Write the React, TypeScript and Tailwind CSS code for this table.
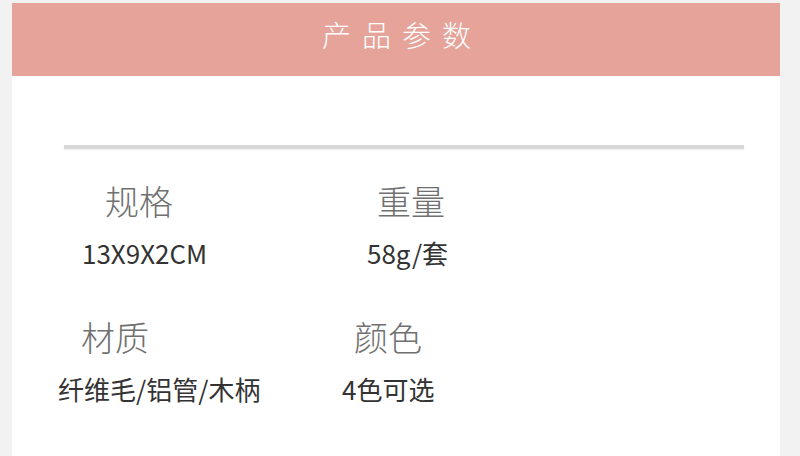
import React from "react";

const font = { fontFamily: '"Noto Sans CJK SC", "Noto Sans", sans-serif' };

function Cell({ label, value, lp, vp }: { label: string; value: string; lp: string; vp: string }) {
  return (
    <div className="flex flex-col">
      <div className={`text-[34px] leading-none font-light text-[#707070] ${lp}`}>{label}</div>
      <div className={`mt-[22px] text-[26px] leading-none text-[#333333] ${vp}`}>{value}</div>
    </div>
  );
}

export default function App() {
  return (
    <div className="w-[800px] h-[456px] overflow-hidden bg-[#f2f2f2] pt-[3px] pl-[12px] pr-[20px]" style={font}>
      <div className="h-[460px] bg-white flex flex-col">
        <div className="h-[73px] bg-[#e5a39a] flex items-center justify-center pl-[12px] pb-[10px]">
          <span className="text-[29px] leading-none font-light tracking-[11px] text-white">产品参数</span>
        </div>
        <div className="mt-[69px] ml-[52px] mr-[36px] h-[4px] bg-[#d8d8d8] shadow-[0_1px_2px_rgba(0,0,0,0.08)]" />
        <div className="mt-[35px] grid grid-cols-[300px_1fr]">
          <Cell label="规格" value="13X9X2CM" lp="pl-[93px]" vp="pl-[70px]" />
          <Cell label="重量" value="58g/套" lp="pl-[65px]" vp="pl-[55px]" />
        </div>
        <div className="mt-[54px] grid grid-cols-[300px_1fr]">
          <Cell label="材质" value="纤维毛/铝管/木柄" lp="pl-[69px]" vp="pl-[46px]" />
          <Cell label="颜色" value="4色可选" lp="pl-[42px]" vp="pl-[30px]" />
        </div>
      </div>
    </div>
  );
}
